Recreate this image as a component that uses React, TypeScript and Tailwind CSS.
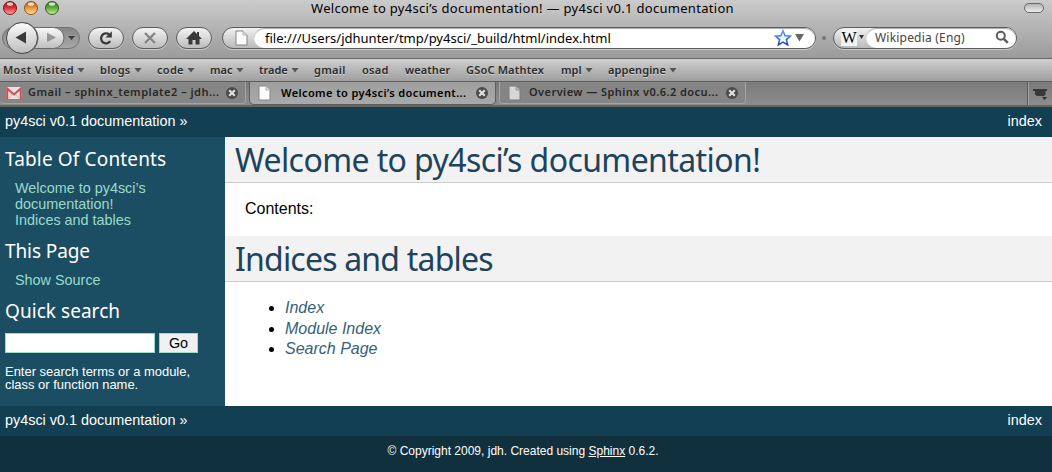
import React from "react";

const chrome = "font-['Noto_Sans',sans-serif]";
const heading = "font-['Noto_Sans',sans-serif] font-normal";

function Light({ id, edge, mid, glow }: { id: string; edge: string; mid: string; glow: string }) {
  return (
    <svg width="16" height="16" viewBox="0 0 16 16">
      <defs>
        <linearGradient id={id} x1="0" y1="0" x2="0" y2="1">
          <stop offset="0" stopColor={edge} />
          <stop offset="0.5" stopColor={mid} />
          <stop offset="1" stopColor={glow} />
        </linearGradient>
      </defs>
      <circle cx="8" cy="8" r="6.5" fill={`url(#${id})`} stroke={edge} strokeWidth="1" />
      <ellipse cx="8" cy="4" rx="3.2" ry="1.8" fill="#fff" opacity="0.75" />
    </svg>
  );
}

function PageIcon({ dim = false }: { dim?: boolean }) {
  return (
    <svg className="shrink-0" width="13" height="16" viewBox="0 0 13 16">
      <path d="M1 1h7l4 4v10H1z" fill={dim ? "#d6d6d6" : "#fcfcfc"} stroke={dim ? "#7b7b7b" : "#858585"} />
      <path d="M8 1v4h4" fill={dim ? "#bbb" : "#e2e2e2"} stroke={dim ? "#8b8b8b" : "#a5a5a5"} strokeWidth="0.8" />
    </svg>
  );
}

function CloseIcon() {
  return (
    <svg className="ml-px shrink-0" width="12" height="12" viewBox="0 0 12 12">
      <circle cx="6" cy="6" r="6" fill="#4b4b4b" />
      <path d="M3.200 3.200l5.600 5.600M8.800 3.200L3.200 8.800" stroke="#dedede" strokeWidth="2.200" />
    </svg>
  );
}

function Caret() {
  return (
    <svg className="mt-px ml-[3px] shrink-0" width="8" height="5" viewBox="0 0 8 5">
      <path d="M0.5 0h7L4 4.5z" fill="#555" />
    </svg>
  );
}

function Pill({ className = "", children }: { className?: string; children: React.ReactNode }) {
  return (
    <div
      className={`flex h-[22px] w-9 items-center justify-center rounded-full border border-[#5c5c5c] bg-linear-to-b from-[#f4f4f4] to-[#bcbcbc] shadow-[0_1px_0_#c9c9c9] ${className}`}
    >
      {children}
    </div>
  );
}

function TitleBar() {
  return (
    <div className="flex h-[18px] items-start">
      <div className="flex w-[311px] gap-[5px] pl-[2px]">
        <Light id="red" edge="#7c1518" mid="#e2333b" glow="#ffaeb0" />
        <Light id="amber" edge="#96511a" mid="#f0973a" glow="#ffe79a" />
        <Light id="green" edge="#2c6419" mid="#62b03d" glow="#c8f3a0" />
      </div>
      <span className="h-[18px] grow text-[13px] leading-[17px] tracking-[0.3px] whitespace-nowrap text-black">
        Welcome to py4sci’s documentation! — py4sci v0.1 documentation
      </span>
      <span className="mt-[3px] mr-2 h-[10px] w-5 rounded-full border border-[#696969] bg-linear-to-b from-[#b4b4b4] to-[#ededed]" />
    </div>
  );
}

function Navigation() {
  return (
    <svg className="shrink-0" width="82" height="34" viewBox="0 0 82 34">
      <defs>
        <linearGradient id="btn" x1="0" y1="0" x2="0" y2="1">
          <stop offset="0" stopColor="#fbfbfb" />
          <stop offset="0.5" stopColor="#dcdcdc" />
          <stop offset="1" stopColor="#bdbdbd" />
        </linearGradient>
        <linearGradient id="track" x1="0" y1="0" x2="0" y2="1">
          <stop offset="0" stopColor="#858585" />
          <stop offset="1" stopColor="#a9a9a9" />
        </linearGradient>
      </defs>
      <rect x="2.5" y="6.5" width="77" height="21" rx="10.5" fill="url(#track)" stroke="#737373" />
      <path d="M22 6.5h31.500a10.500 10.500 0 0 1 0 21H22z" fill="url(#btn)" stroke="#686868" />
      <circle cx="22.500" cy="17" r="16" fill="#777" />
      <circle cx="22" cy="17" r="15.500" fill="url(#btn)" stroke="#484848" />
      <path d="M15.500 16.500l10.500-6v12z" fill="#383838" />
      <path d="M56 16.500l-9-4.800v9.600z" fill="#969696" />
      <path d="M68 15h7l-3.500 4z" fill="#3c3c3c" />
    </svg>
  );
}

function Toolbar() {
  return (
    <div className="flex h-10 items-center">
      <Navigation />
      <Pill className="ml-[6px]">
        <svg width="16" height="16" viewBox="0 0 16 16">
          <path d="M12.200 11.200A5 5 0 1 1 11 4.300" fill="none" stroke="#3b3b3b" strokeWidth="2.300" />
          <path d="M13.800 1.200v6.300H7.500z" fill="#3b3b3b" />
        </svg>
      </Pill>
      <Pill className="ml-2">
        <svg width="14" height="14" viewBox="0 0 14 14">
          <path d="M2 2l10 10M12 2L2 12" stroke="#858585" strokeWidth="2.300" />
        </svg>
      </Pill>
      <Pill className="ml-2">
        <svg width="16" height="14" viewBox="0 0 16 14">
          <path d="M8 0l3 3V1h2v4l3 3h-2.500v5.500H9.500V9h-3v4.500H2.500V8H0z" fill="#393939" />
        </svg>
      </Pill>
      <div className="ml-[10px] flex h-[22px] w-[594px] items-center rounded-full border border-[#5c5c5c] bg-linear-to-b from-[#f2f2f2] to-[#b9b9b9] shadow-[0_1px_0_#c9c9c9]">
        <div className="flex w-[31px] justify-center pl-[6px]">
          <PageIcon />
        </div>
        <div className="flex h-5 grow items-center rounded-full bg-white pr-[11px] pl-[11px] shadow-[inset_0_1px_1px_#aaa]">
          <span className="grow text-[13px] leading-5 tracking-[0.01px] whitespace-nowrap text-black">
            file:///Users/jdhunter/tmp/py4sci/_build/html/index.html
          </span>
          <svg width="18" height="18" viewBox="0 0 18 18">
            <defs>
              <linearGradient id="star" x1="0" y1="0" x2="0" y2="1">
                <stop offset="0" stopColor="#5b9be8" />
                <stop offset="1" stopColor="#1744d8" />
              </linearGradient>
            </defs>
            <path
              d="M9 1.800l2.100 4.900 5.300.4-4 3.500 1.300 5.300L9 13.200l-4.700 2.700 1.300-5.300-4-3.500 5.300-.4z"
              fill="#f1f7ff"
              stroke="url(#star)"
              strokeWidth="1.500"
            />
          </svg>
          <svg className="ml-[3px]" width="9" height="8" viewBox="0 0 9 8">
            <path d="M0 0h9L4.500 7.500z" fill="#666" />
          </svg>
        </div>
      </div>
      <span className="ml-[6px] h-1 w-1 rounded-full bg-[#777]" />
      <div className="ml-[7px] flex h-[22px] w-[184px] items-center rounded-full border border-[#5c5c5c] bg-linear-to-b from-[#f2f2f2] to-[#b9b9b9] shadow-[0_1px_0_#c9c9c9]">
        <div className="flex w-8 items-center pl-[7px]">
          <span className="flex h-4 w-4 items-center justify-center bg-[#f4f4f4] font-['Liberation_Serif',serif] text-[16px] text-black">
            W
          </span>
          <svg className="-mt-[3px] ml-[2px]" width="5" height="4" viewBox="0 0 5 4">
            <path d="M0 0h5L2.500 4z" fill="#333" />
          </svg>
        </div>
        <div className="flex h-5 grow items-center rounded-full bg-white pr-[7px] pl-[9px] shadow-[inset_0_1px_1px_#aaa]">
          <span className="grow text-[12px] leading-5 tracking-[0.2px] whitespace-nowrap text-[#444]">
            Wikipedia (Eng)
          </span>
          <svg className="-mt-[2px]" width="14" height="14" viewBox="0 0 14 14">
            <circle cx="5.800" cy="5.800" r="4" fill="none" stroke="#5c5c5c" strokeWidth="2" />
            <path d="M8.800 8.800l4 4" stroke="#5c5c5c" strokeWidth="2.500" />
          </svg>
        </div>
      </div>
    </div>
  );
}

const bookmarks = [
  { label: "Most Visited", menu: true, width: "w-[97px] tracking-[0.4px]" },
  { label: "blogs", menu: true, width: "w-[57px] tracking-[0.3px]" },
  { label: "code", menu: true, width: "w-[53px] tracking-[0.3px]" },
  { label: "mac", menu: true, width: "w-[49px]" },
  { label: "trade", menu: true, width: "w-[55px]" },
  { label: "gmail", menu: false, width: "w-[48px] tracking-[0.3px]" },
  { label: "osad", menu: false, width: "w-[43px] tracking-[0.3px]" },
  { label: "weather", menu: false, width: "w-[61px] tracking-[0.1px]" },
  { label: "GSoC Mathtex", menu: false, width: "w-[95px] tracking-[0.2px]" },
  { label: "mpl", menu: true, width: "w-[47px]" },
  { label: "appengine", menu: true, width: "w-[80px] tracking-[0.1px]" },
];

function Bookmarks() {
  return (
    <div className="flex h-6 items-center border-t border-b border-t-[#666] border-b-[#5e5e5e] bg-linear-to-b from-[#cfcfcf] to-[#9f9f9f] pl-[3px]">
      {bookmarks.map((b) => (
        <div key={b.label} className={`flex shrink-0 items-center ${b.width}`}>
          <span className="text-[11px] leading-[22px] font-semibold whitespace-nowrap text-[#2b2b2b] [text-shadow:0_1px_0_#d0d0d0]">
            {b.label}
          </span>
          {b.menu && <Caret />}
        </div>
      ))}
    </div>
  );
}

function Tabs() {
  return (
    <div className="flex h-[25px] items-start border-b-2 border-b-[#646464] bg-linear-to-b from-[#7a7a7a] to-[#8d8d8d] text-[11px] font-semibold whitespace-nowrap">
      <div className="flex h-[22px] w-[246px] items-center rounded-b-[4px] border-r border-b border-[#a3a3a3] bg-[#858585] pl-[6px] text-[#272727]">
        <svg className="shrink-0" width="16" height="12" viewBox="0 0 16 12">
          <rect width="16" height="12" rx="1" fill="#e8dfdf" />
          <path d="M1.200 12V1.500L8 7.500l6.800-6V12" fill="none" stroke="#c8504f" strokeWidth="2" />
          <path d="M3 11l3.500-4M13 11L9.500 7" stroke="#d69c9b" strokeWidth="0.800" />
        </svg>
        <span className="ml-[6px] w-[197px] tracking-[0.5px]">Gmail – sphinx_template2 – jdh...</span>
        <CloseIcon />
      </div>
      <div className="ml-[3px] flex h-[23px] w-[247px] items-center rounded-b-[5px] border-r border-b border-l border-[#5d5d5d] bg-linear-to-b from-[#9e9e9e] to-[#a9a9a9] pl-[8px] text-black">
        <PageIcon />
        <span className="ml-[10px] w-[194px] tracking-[0.4px]">Welcome to py4sci’s document...</span>
        <CloseIcon />
      </div>
      <div className="ml-[3px] flex h-[22px] w-[247px] items-center rounded-b-[4px] border-r border-b border-l border-[#a3a3a3] bg-[#858585] pl-[8px] text-[#272727]">
        <PageIcon dim />
        <span className="ml-[8px] w-[196px] tracking-[0.44px]">Overview — Sphinx v0.6.2 docu...</span>
        <CloseIcon />
      </div>
      <div className="ml-auto flex h-[23px] w-[25px] items-center justify-center border-l border-[#5a5a5a] shadow-[inset_1px_0_0_#a3a3a3]">
        <svg width="14" height="12" viewBox="0 0 14 12">
          <path d="M0 1h14v2h-1.500v3.500L11 8H4L2 6.500V3H0z" fill="#383838" />
          <path d="M9 9h5l-2.500 3z" fill="#303030" />
        </svg>
      </div>
    </div>
  );
}

function RelBar() {
  return (
    <div className="flex h-[30px] justify-between bg-[#133f52] pr-[10px] pl-[5px] text-[14.4px] leading-[29px] text-white">
      <span>py4sci v0.1 documentation »</span>
      <span>index</span>
    </div>
  );
}

function Sidebar() {
  return (
    <div className="flex w-[225px] shrink-0 flex-col bg-[#1c4e63] pl-[5px] text-white">
      <h3 className={`${heading} mt-[10px] h-6 text-[19px] leading-6 tracking-[0.15px] whitespace-nowrap`}>
        Table Of Contents
      </h3>
      <ul className="mt-[9px] ml-[10px] text-[14.4px] leading-4 text-[#98dbcc]">
        <li>
          Welcome to py4sci’s
          <br />
          documentation!
        </li>
        <li>Indices and tables</li>
      </ul>
      <h3 className={`${heading} mt-[11px] h-6 text-[19px] leading-6 tracking-[-0.1px]`}>This Page</h3>
      <span className="mt-[9px] ml-[10px] text-[14.4px] leading-4 text-[#98dbcc]">Show Source</span>
      <h3 className={`${heading} mt-[11px] h-6 text-[19px] leading-6 tracking-[0.05px]`}>Quick search</h3>
      <div className="mt-[10px] flex gap-1">
        <input aria-label="Search" className="h-5 w-[150px] border border-[#98dbcc] bg-white" />
        <button className="h-5 w-[39px] border border-[#98dbcc] bg-[#f0f0f0] text-[14.4px] leading-[17px] text-black">
          Go
        </button>
      </div>
      <p className="mt-[12px] text-[12.96px] leading-[13px] whitespace-nowrap">
        Enter search terms or a module,
        <br />
        class or function name.
      </p>
    </div>
  );
}

function Content() {
  const h1 = `${heading} h-[46px] border-b border-[#ccc] bg-[#f2f2f2] pl-[10px] text-[32px] leading-[46px] whitespace-nowrap text-[#20435c]`;
  return (
    <div className="grow bg-white text-[16px] text-black">
      <h1 className={`${h1} tracking-[-0.6px]`}>Welcome to py4sci’s documentation!</h1>
      <p className="h-[53px] pt-[16px] pl-5 leading-5">Contents:</p>
      <h1 className={`${h1} tracking-[-0.8px]`}>Indices and tables</h1>
      <ul className="mt-4 list-disc pl-[60px] leading-[20.500px]">
        {["Index", "Module Index", "Search Page"].map((t) => (
          <li key={t}>
            <em className="text-[#355f7c]">{t}</em>
          </li>
        ))}
      </ul>
    </div>
  );
}

export default function App() {
  return (
    <div className="flex h-[472px] w-[1052px] flex-col overflow-hidden font-['Liberation_Sans',sans-serif]">
      <div className={`${chrome} bg-[#a0a0a0]`}>
        <div className="bg-linear-to-b from-[#cbcbcb] to-[#9b9b9b]">
          <TitleBar />
          <Toolbar />
        </div>
        <Bookmarks />
        <Tabs />
      </div>
      <RelBar />
      <div className="flex h-[269px]">
        <Sidebar />
        <Content />
      </div>
      <RelBar />
      <div className="grow bg-[#11303d] pr-[6px] text-center text-[12px] leading-[30px] text-white">
        © Copyright 2009, jdh. Created using <span className="underline">Sphinx</span> 0.6.2.
      </div>
    </div>
  );
}
